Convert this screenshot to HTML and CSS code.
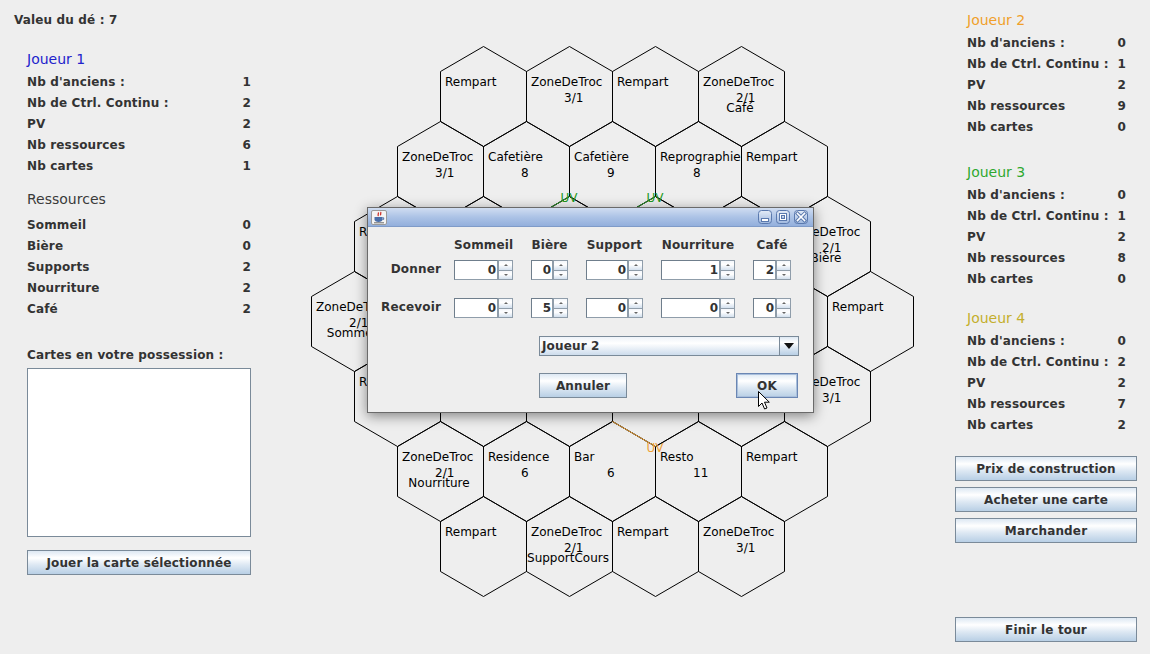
FILE: index.html
```html
<!DOCTYPE html>
<html lang="fr">
<head>
<meta charset="utf-8">
<title>Plateau</title>
<link rel="stylesheet" href="styles.css">
</head>
<body>
<div class="app">
  <aside class="left">
    <div class="dice">Valeu du dé : 7</div>
    <section class="panel p1">
      <h2 class="ptitle blue">Joueur 1</h2>
      <div class="stats">
        <div class="row"><span>Nb d'anciens :</span><span>1</span></div>
        <div class="row"><span>Nb de Ctrl. Continu :</span><span>2</span></div>
        <div class="row"><span>PV</span><span>2</span></div>
        <div class="row"><span>Nb ressources</span><span>6</span></div>
        <div class="row"><span>Nb cartes</span><span>1</span></div>
      </div>
    </section>
    <section class="panel res">
      <h3 class="rtitle">Ressources</h3>
      <div class="stats res-stats">
        <div class="row"><span>Sommeil</span><span>0</span></div>
        <div class="row"><span>Bière</span><span>0</span></div>
        <div class="row"><span>Supports</span><span>2</span></div>
        <div class="row"><span>Nourriture</span><span>2</span></div>
        <div class="row"><span>Café</span><span>2</span></div>
      </div>
    </section>
    <div class="panel cards-label">Cartes en votre possession :</div>
    <div class="panel cards-list"></div>
    <button class="panel btn btn-play">Jouer la carte sélectionnée</button>
  </aside>

  <main class="board">
    <svg class="board-svg" width="640" height="654" viewBox="300 0 640 654">
      <g class="hexes" transform="translate(0.5 0.5)">
        <polygon points="483,46 526,71 526,121 483,146 440,121 440,71"/>
        <polygon points="569,46 612,71 612,121 569,146 526,121 526,71"/>
        <polygon points="655,46 698,71 698,121 655,146 612,121 612,71"/>
        <polygon points="741,46 784,71 784,121 741,146 698,121 698,71"/>

        <polygon points="440,121 483,146 483,196 440,221 397,196 397,146"/>
        <polygon points="526,121 569,146 569,196 526,221 483,196 483,146"/>
        <polygon points="612,121 655,146 655,196 612,221 569,196 569,146"/>
        <polygon points="698,121 741,146 741,196 698,221 655,196 655,146"/>
        <polygon points="784,121 827,146 827,196 784,221 741,196 741,146"/>

        <polygon points="397,196 440,221 440,271 397,296 354,271 354,221"/>
        <polygon points="483,196 526,221 526,271 483,296 440,271 440,221"/>
        <polygon points="569,196 612,221 612,271 569,296 526,271 526,221"/>
        <polygon points="655,196 698,221 698,271 655,296 612,271 612,221"/>
        <polygon points="741,196 784,221 784,271 741,296 698,271 698,221"/>
        <polygon points="827,196 870,221 870,271 827,296 784,271 784,221"/>

        <polygon points="354,271 397,296 397,346 354,371 311,346 311,296"/>
        <polygon points="440,271 483,296 483,346 440,371 397,346 397,296"/>
        <polygon points="526,271 569,296 569,346 526,371 483,346 483,296"/>
        <polygon points="612,271 655,296 655,346 612,371 569,346 569,296"/>
        <polygon points="698,271 741,296 741,346 698,371 655,346 655,296"/>
        <polygon points="784,271 827,296 827,346 784,371 741,346 741,296"/>
        <polygon points="870,271 913,296 913,346 870,371 827,346 827,296"/>

        <polygon points="397,346 440,371 440,421 397,446 354,421 354,371"/>
        <polygon points="483,346 526,371 526,421 483,446 440,421 440,371"/>
        <polygon points="569,346 612,371 612,421 569,446 526,421 526,371"/>
        <polygon points="655,346 698,371 698,421 655,446 612,421 612,371"/>
        <polygon points="741,346 784,371 784,421 741,446 698,421 698,371"/>
        <polygon points="827,346 870,371 870,421 827,446 784,421 784,371"/>

        <polygon points="440,421 483,446 483,496 440,521 397,496 397,446"/>
        <polygon points="526,421 569,446 569,496 526,521 483,496 483,446"/>
        <polygon points="612,421 655,446 655,496 612,521 569,496 569,446"/>
        <polygon points="698,421 741,446 741,496 698,521 655,496 655,446"/>
        <polygon points="784,421 827,446 827,496 784,521 741,496 741,446"/>

        <polygon points="483,496 526,521 526,571 483,596 440,571 440,521"/>
        <polygon points="569,496 612,521 612,571 569,596 526,571 526,521"/>
        <polygon points="655,496 698,521 698,571 655,596 612,571 612,521"/>
        <polygon points="741,496 784,521 784,571 741,596 698,571 698,521"/>

        <line class="road-green" x1="526" y1="221" x2="569" y2="196"/>
        <line class="road-green" x1="612" y1="221" x2="655" y2="196"/>
        <line class="road-orange" x1="612" y1="421" x2="655" y2="446"/>
      </g>
      <g class="labels">
        <text x="445" y="86">Rempart</text>
        <text x="531" y="86">ZoneDeTroc</text><text x="564" y="102">3/1</text>
        <text x="617" y="86">Rempart</text>
        <text x="703" y="86">ZoneDeTroc</text><text x="736" y="102">2/1</text><text class="mid" x="740" y="112">Café</text>

        <text x="402" y="161">ZoneDeTroc</text><text x="435" y="177">3/1</text>
        <text x="488" y="161">Cafetière</text><text x="521" y="177">8</text>
        <text x="574" y="161">Cafetière</text><text x="607" y="177">9</text>
        <text x="660" y="161">Reprographie</text><text x="693" y="177">8</text>
        <text x="746" y="161">Rempart</text>

        <text x="359" y="236">Rempart</text>
        <text x="789" y="236">ZoneDeTroc</text><text x="822" y="252">2/1</text><text class="mid" x="826" y="262">Bière</text>

        <text x="316" y="311">ZoneDeTroc</text><text x="349" y="327">2/1</text><text class="mid" x="353" y="337">Sommeil</text>
        <text x="832" y="311">Rempart</text>

        <text x="359" y="386">Rempart</text>
        <text x="789" y="386">ZoneDeTroc</text><text x="822" y="402">3/1</text>

        <text x="402" y="461">ZoneDeTroc</text><text x="435" y="477">2/1</text><text class="mid" x="439" y="487">Nourriture</text>
        <text x="488" y="461">Residence</text><text x="521" y="477">6</text>
        <text x="574" y="461">Bar</text><text x="607" y="477">6</text>
        <text x="660" y="461">Resto</text><text x="693" y="477">11</text>
        <text x="746" y="461">Rempart</text>

        <text x="445" y="536">Rempart</text>
        <text x="531" y="536">ZoneDeTroc</text><text x="564" y="552">2/1</text><text class="mid" x="568" y="562">SupportCours</text>
        <text x="617" y="536">Rempart</text>
        <text x="703" y="536">ZoneDeTroc</text><text x="736" y="552">3/1</text>

        <text class="uv-green" x="560.5" y="202">UV</text>
        <text class="uv-green" x="646.5" y="202">UV</text>
        <text class="uv-orange" x="646.5" y="452">UV</text>
      </g>
    </svg>
  </main>

  <aside class="right">
    <section class="pblock">
      <h2 class="ptitle orange">Joueur 2</h2>
      <div class="stats">
        <div class="row"><span>Nb d'anciens :</span><span>0</span></div>
        <div class="row"><span>Nb de Ctrl. Continu :</span><span>1</span></div>
        <div class="row"><span>PV</span><span>2</span></div>
        <div class="row"><span>Nb ressources</span><span>9</span></div>
        <div class="row"><span>Nb cartes</span><span>0</span></div>
      </div>
    </section>
    <section class="pblock pblock-3">
      <h2 class="ptitle green">Joueur 3</h2>
      <div class="stats">
        <div class="row"><span>Nb d'anciens :</span><span>0</span></div>
        <div class="row"><span>Nb de Ctrl. Continu :</span><span>1</span></div>
        <div class="row"><span>PV</span><span>2</span></div>
        <div class="row"><span>Nb ressources</span><span>8</span></div>
        <div class="row"><span>Nb cartes</span><span>0</span></div>
      </div>
    </section>
    <section class="pblock pblock-4">
      <h2 class="ptitle olive">Joueur 4</h2>
      <div class="stats">
        <div class="row"><span>Nb d'anciens :</span><span>0</span></div>
        <div class="row"><span>Nb de Ctrl. Continu :</span><span>2</span></div>
        <div class="row"><span>PV</span><span>2</span></div>
        <div class="row"><span>Nb ressources</span><span>7</span></div>
        <div class="row"><span>Nb cartes</span><span>2</span></div>
      </div>
    </section>
    <div class="actions">
      <button class="btn btn-side">Prix de construction</button>
      <button class="btn btn-side">Acheter une carte</button>
      <button class="btn btn-side">Marchander</button>
    </div>
    <button class="btn btn-side btn-finish">Finir le tour</button>
  </aside>
</div>

<div class="dialog">
  <div class="titlebar">
    <svg class="app-icon" width="16" height="15" viewBox="0 0 16 15">
      <rect x="0.5" y="0.5" width="15" height="14" rx="1.5" fill="#f4f4f4" stroke="#9a9a9a"/>
      <path d="M7 2.5c1.5 1-1 2 0.5 3.5M9.5 2c1.2 1-0.8 2 0.4 3.3" fill="none" stroke="#d0302a" stroke-width="1.3"/>
      <path d="M3.5 7h8v2.5c0 1.6-1.6 2.5-4 2.5s-4-0.9-4-2.5z" fill="#4a6ea8"/>
      <path d="M11.5 7.8h1.2v1.6h-1.2" fill="none" stroke="#4a6ea8"/>
      <rect x="3" y="12.3" width="10" height="1" fill="#6b6b6b"/>
    </svg>
    <svg class="wm-buttons" width="51" height="15" viewBox="0 0 51 15">
      <defs>
        <linearGradient id="wmg" x1="0" y1="0" x2="0" y2="1">
          <stop offset="0" stop-color="#e4ecf7"/>
          <stop offset="1" stop-color="#9fb8df"/>
        </linearGradient>
      </defs>
      <rect x="0.5" y="0.5" width="13" height="13" rx="3" fill="url(#wmg)" stroke="#5a79ae"/>
      <rect x="3.5" y="8.5" width="7" height="3" fill="#fff" stroke="#5a79ae"/>
      <rect x="18.5" y="0.5" width="13" height="13" rx="3" fill="url(#wmg)" stroke="#5a79ae"/>
      <rect x="21.5" y="3.5" width="7" height="7" fill="#fff" stroke="#5a79ae"/>
      <rect x="23.5" y="5.5" width="3" height="3" fill="url(#wmg)" stroke="#5a79ae"/>
      <rect x="36.5" y="0.5" width="13" height="13" rx="3" fill="url(#wmg)" stroke="#5a79ae"/>
      <path d="M39.5 3.5l7 7M46.5 3.5l-7 7" stroke="#5a79ae" stroke-width="3.6" stroke-linecap="square"/>
      <path d="M39.5 3.5l7 7M46.5 3.5l-7 7" stroke="#fff" stroke-width="1.6" stroke-linecap="square"/>
    </svg>
  </div>
  <div class="dlg-body">
    <div class="trade">
      <div class="corner"></div>
      <div class="hd w-som">Sommeil</div>
      <div class="hd w-bie">Bière</div>
      <div class="hd w-sup">Support</div>
      <div class="hd w-nou">Nourriture</div>
      <div class="hd w-caf">Café</div>

      <div class="lbl">Donner</div>
      <div class="spin w-som"><span class="field">0</span><span class="arrows"><i class="up"></i><i class="down"></i></span></div>
      <div class="spin w-bie"><span class="field">0</span><span class="arrows"><i class="up"></i><i class="down"></i></span></div>
      <div class="spin w-sup"><span class="field">0</span><span class="arrows"><i class="up"></i><i class="down"></i></span></div>
      <div class="spin w-nou"><span class="field">1</span><span class="arrows"><i class="up"></i><i class="down"></i></span></div>
      <div class="spin w-caf"><span class="field">2</span><span class="arrows"><i class="up"></i><i class="down"></i></span></div>

      <div class="lbl">Recevoir</div>
      <div class="spin w-som"><span class="field">0</span><span class="arrows"><i class="up"></i><i class="down"></i></span></div>
      <div class="spin w-bie"><span class="field">5</span><span class="arrows"><i class="up"></i><i class="down"></i></span></div>
      <div class="spin w-sup"><span class="field">0</span><span class="arrows"><i class="up"></i><i class="down"></i></span></div>
      <div class="spin w-nou"><span class="field">0</span><span class="arrows"><i class="up"></i><i class="down"></i></span></div>
      <div class="spin w-caf"><span class="field">0</span><span class="arrows"><i class="up"></i><i class="down"></i></span></div>
    </div>
    <div class="combo"><span class="combo-text">Joueur 2</span><span class="combo-btn"><i class="caret"></i></span></div>
    <div class="dlg-actions">
      <button class="btn btn-cancel">Annuler</button>
      <button class="btn btn-ok">OK</button>
    </div>
  </div>
</div>

<svg class="cursor" width="14" height="21" viewBox="0 0 14 21">
  <path d="M1.5 1.5 L1.5 16.5 L5 13 L7.6 19 L10 18 L7.5 12.2 L12.3 12.2 Z" fill="#fff" stroke="#000" stroke-linejoin="round"/>
</svg>
</body>
</html>
```

FILE: styles.css
```css
* {
  box-sizing: border-box;
}

html,
body {
  margin: 0;
  padding: 0;
}

body {
  position: relative;
  width: 1150px;
  height: 654px;
  overflow: hidden;
  background: #eeeeee;
  color: #333333;
  font-family: "DejaVu Sans", "Liberation Sans", sans-serif;
}

.app {
  display: flex;
  height: 654px;
}

/* ---------- left column ---------- */
.left {
  width: 300px;
  flex: none;
  padding: 13px 0 0 14px;
}

.dice {
  font-size: 12px;
  font-weight: bold;
  line-height: 15px;
  letter-spacing: 0.15px;
}

.panel {
  margin-left: 13px;
  width: 224px;
}

.p1 {
  margin-top: 21px;
}

.ptitle {
  margin: 0;
  font-size: 14px;
  font-weight: normal;
  line-height: 21px;
}

.blue { color: #2222cc; }
.orange { color: #f0a02a; }
.green { color: #2fa82f; }
.olive { color: #c4ae2c; }

.stats {
  margin-top: 2px;
}

.row {
  display: flex;
  justify-content: space-between;
  height: 21px;
  font-size: 12px;
  font-weight: bold;
  line-height: 21px;
  letter-spacing: 0.15px;
  white-space: nowrap;
}

.res {
  margin-top: 12px;
}

.rtitle {
  margin: 0;
  font-size: 14px;
  font-weight: normal;
  line-height: 21px;
  color: #3a3a3a;
}

.stats.res-stats {
  margin-top: 5px;
}

.cards-label {
  margin-top: 28px;
  font-size: 12px;
  font-weight: bold;
  line-height: 15px;
  letter-spacing: 0.15px;
}

.cards-list {
  margin-top: 5px;
  height: 169px;
  background: #ffffff;
  border: 1px solid #7a8a99;
}

/* ---------- buttons ---------- */
.btn {
  display: block;
  height: 25px;
  padding: 0;
  border: 1px solid #7a8a99;
  background: linear-gradient(to bottom, #dde8f3 0%, #ffffff 30%, #dde8f3 60%, #b8cfe5 100%);
  color: #333333;
  font-family: "DejaVu Sans", "Liberation Sans", sans-serif;
  font-size: 12px;
  font-weight: bold;
  letter-spacing: 0.15px;
  text-align: center;
  line-height: 24px;
}

.btn-play {
  margin-top: 13px;
}

/* ---------- board ---------- */
.board {
  width: 640px;
  flex: none;
}

.board-svg {
  display: block;
}

.hexes polygon {
  fill: none;
  stroke: #000000;
  stroke-width: 1;
}

.road-green {
  stroke: #2c9c2c;
  stroke-width: 1;
}

.road-orange {
  stroke: #eea238;
  stroke-width: 1;
}

.labels text {
  font-family: "DejaVu Sans", sans-serif;
  font-size: 12px;
  fill: #000000;
}

.labels text.mid {
  text-anchor: middle;
}

.labels text.uv-green {
  fill: #229a22;
}

.labels text.uv-orange {
  fill: #eea238;
}

/* ---------- right column ---------- */
.right {
  width: 210px;
  flex: none;
  padding: 10px 0 0 15px;
}

.pblock {
  margin-left: 12px;
  width: 159px;
}

.pblock-3 {
  margin-top: 24px;
}

.pblock-4 {
  margin-top: 18px;
}

.actions {
  margin-top: 20px;
  display: flex;
  flex-direction: column;
  gap: 6px;
}

.btn-side {
  width: 182px;
}

.btn-finish {
  margin-top: 74px;
}

/* ---------- dialog ---------- */
.dialog {
  position: absolute;
  left: 367px;
  top: 207px;
  width: 447px;
  height: 206px;
  border: 1px solid #6a6a6a;
  background: #eeeeee;
  box-shadow: 0 3px 12px rgba(0, 0, 0, 0.45);
}

.titlebar {
  display: flex;
  align-items: center;
  justify-content: space-between;
  height: 19px;
  padding: 0 4px 0 3px;
  background: linear-gradient(to bottom, #d0ddf1 0%, #acc3e6 50%, #93afdc 100%);
  border-bottom: 1px solid #7f9bc8;
}

.app-icon,
.wm-buttons {
  display: block;
}

.dlg-body {
  padding-top: 10px;
}

.trade {
  display: grid;
  grid-template-columns: 73px 72px 55px 75px 92px 56px;
  grid-template-rows: 16px 27px 38px;
}

.hd {
  justify-self: end;
  font-size: 12px;
  font-weight: bold;
  letter-spacing: 0.15px;
  line-height: 16px;
  text-align: center;
  white-space: nowrap;
}

.lbl {
  align-self: end;
  font-size: 12px;
  font-weight: bold;
  letter-spacing: 0.15px;
  line-height: 21px;
  text-align: right;
}

.w-som { width: 59px; }
.w-bie { width: 37px; }
.w-sup { width: 57px; }
.w-nou { width: 74px; }
.w-caf { width: 38px; }

.spin {
  justify-self: end;
  align-self: end;
  display: flex;
  height: 20px;
}

.field {
  flex: 1;
  height: 20px;
  padding-right: 1px;
  border: 1px solid #8f9daa;
  border-top-color: #6f7e8c;
  border-left-color: #6f7e8c;
  background: #ffffff;
  font-size: 12px;
  font-weight: bold;
  line-height: 19px;
  text-align: right;
}

.arrows {
  display: flex;
  flex-direction: column;
  width: 15px;
  height: 20px;
}

.arrows i {
  position: relative;
  display: block;
  height: 10px;
  border: 1px solid #8f9daa;
  background: linear-gradient(to bottom, #f4f7fb 0%, #ffffff 40%, #d3e0ee 100%);
}

.arrows i.up {
  border-bottom: none;
}

.arrows i::after {
  content: "";
  position: absolute;
  left: 5px;
  width: 0;
  height: 0;
  border-left: 2px solid transparent;
  border-right: 2px solid transparent;
}

.arrows i.up::after {
  top: 3px;
  border-bottom: 2px solid #666666;
}

.arrows i.down::after {
  top: 3px;
  border-top: 2px solid #666666;
}

.combo {
  display: flex;
  width: 260px;
  height: 20px;
  margin: 18px 0 0 171px;
  border: 1px solid #7a8a99;
  background: linear-gradient(to bottom, #eef3f9 0%, #ffffff 35%, #e4ecf5 70%, #cddcec 100%);
}

.combo-text {
  flex: 1;
  padding-left: 2px;
  font-size: 12px;
  font-weight: bold;
  letter-spacing: 0.15px;
  line-height: 19px;
}

.combo-btn {
  display: flex;
  align-items: center;
  justify-content: center;
  width: 19px;
  border-left: 1px solid #7a8a99;
  background: linear-gradient(to bottom, #dde8f3 0%, #ffffff 30%, #dde8f3 60%, #b8cfe5 100%);
}

.caret {
  display: block;
  width: 0;
  height: 0;
  border-left: 5px solid transparent;
  border-right: 5px solid transparent;
  border-top: 6px solid #111111;
}

.dlg-actions {
  display: flex;
  justify-content: space-between;
  width: 259px;
  margin: 17px 0 0 171px;
}

.btn-cancel {
  width: 88px;
}

.btn-ok {
  width: 62px;
  border-color: #6a86b3;
  box-shadow: inset 0 0 0 1px #a9bfdc;
}

.cursor {
  position: absolute;
  left: 757px;
  top: 390px;
  display: block;
}
```
